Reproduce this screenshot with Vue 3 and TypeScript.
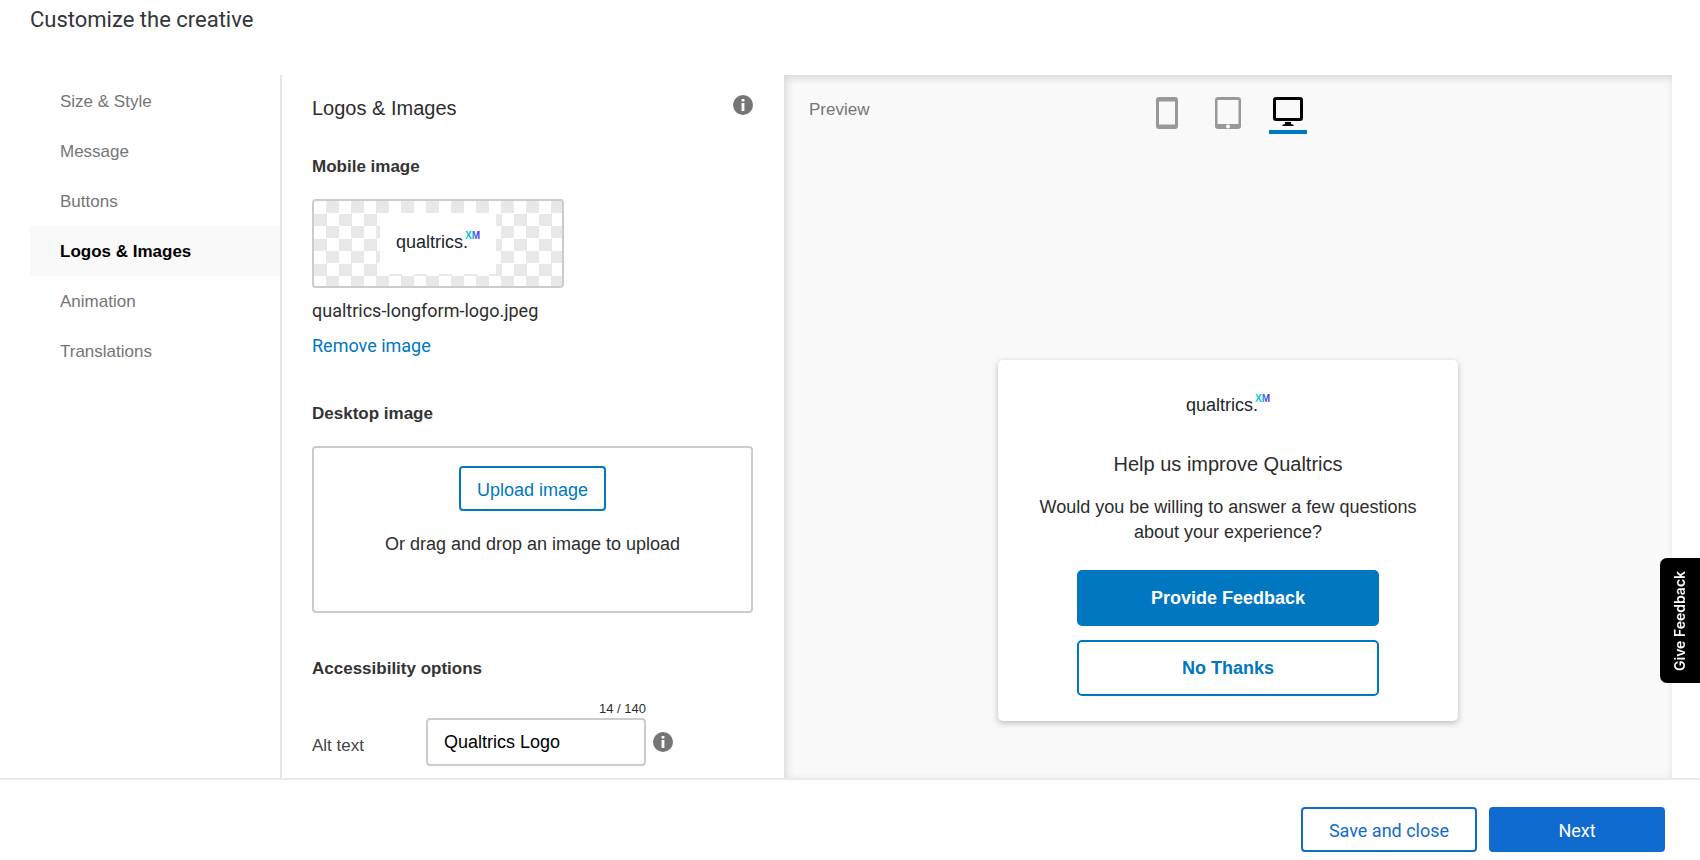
<script setup lang="ts">
import { ref } from 'vue'

type Device = 'phone' | 'tablet' | 'desktop'

const sections: string[] = ['Size & Style', 'Message', 'Buttons', 'Logos & Images', 'Animation', 'Translations']
const activeSection = ref('Logos & Images')

const devices: { id: Device; label: string }[] = [
  { id: 'phone', label: 'Phone preview' },
  { id: 'tablet', label: 'Tablet preview' },
  { id: 'desktop', label: 'Desktop preview' },
]
const device = ref<Device>('desktop')

const altText = ref('Qualtrics Logo')
const maxAlt = 140
</script>

<template>
  <div class="page">
    <svg class="defs" width="0" height="0" aria-hidden="true">
      <defs>
        <linearGradient id="xm" x1="0" y1="0" x2="1" y2="0">
          <stop offset="0" stop-color="#21dbaa" />
          <stop offset="0.4" stop-color="#00b4ef" />
          <stop offset="1" stop-color="#5f1ae5" />
        </linearGradient>
        <symbol id="logo" viewBox="0 0 116 61">
          <text class="word" x="16" y="35">qualtrics.</text>
          <text class="xm" x="85" y="26" fill="url(#xm)">XM</text>
        </symbol>
        <symbol id="info" viewBox="0 0 20 20">
          <circle cx="10" cy="10" r="10" fill="#757575" />
          <path d="M8.6 4h2.8v2.4H8.6zM8.6 8h2.8v8H8.6z" fill="#fff" />
        </symbol>
      </defs>
    </svg>

    <header class="top">
      <h1>Customize the creative</h1>
    </header>

    <main class="body">
      <nav class="nav" aria-label="Creative sections">
        <a
          v-for="s in sections"
          :key="s"
          href="#"
          :class="{ active: s === activeSection }"
          @click.prevent="activeSection = s"
        >{{ s }}</a>
      </nav>

      <section class="settings">
        <div class="title-row">
          <h2>Logos &amp; Images</h2>
          <button class="info" type="button" aria-label="About logos and images">
            <svg><use href="#info" /></svg>
          </button>
        </div>

        <h3>Mobile image</h3>
        <div class="thumb">
          <svg class="logo" role="img" aria-label="qualtrics XM"><use href="#logo" /></svg>
        </div>
        <p class="file">qualtrics-longform-logo.jpeg</p>
        <a class="remove" href="#" @click.prevent>Remove image</a>

        <h3 class="group-head">Desktop image</h3>
        <div class="drop">
          <button class="upload" type="button">Upload image</button>
          <p>Or drag and drop an image to upload</p>
        </div>

        <h3 class="group-head">Accessibility options</h3>
        <div class="alt">
          <label for="alt">Alt text</label>
          <span class="count">{{ altText.length }} / {{ maxAlt }}</span>
          <input id="alt" v-model="altText" type="text" :maxlength="maxAlt" />
          <button class="info" type="button" aria-label="About alt text">
            <svg><use href="#info" /></svg>
          </button>
        </div>
      </section>

      <section class="preview">
        <div class="preview-bar">
          <h2>Preview</h2>
          <div class="devices">
            <button
              v-for="d in devices"
              :key="d.id"
              type="button"
              :aria-label="d.label"
              :aria-pressed="device === d.id"
              :class="{ on: device === d.id }"
              @click="device = d.id"
            >
              <svg viewBox="0 0 30 32">
                <path
                  v-if="d.id === 'phone'"
                  fill-rule="evenodd"
                  d="M6 0h16a3 3 0 0 1 3 3v26a3 3 0 0 1-3 3H6a3 3 0 0 1-3-3V3a3 3 0 0 1 3-3zM6 4.5v23h16v-23z"
                />
                <template v-else-if="d.id === 'tablet'">
                  <path
                    fill-rule="evenodd"
                    d="M5 0h20a3 3 0 0 1 3 3v26a3 3 0 0 1-3 3H5a3 3 0 0 1-3-3V3a3 3 0 0 1 3-3zM4.500 3v24h21V3z"
                  />
                  <circle cx="15" cy="29.5" r="2" fill="#fff" />
                </template>
                <path
                  v-else
                  fill-rule="evenodd"
                  d="M3 0h24a3 3 0 0 1 3 3v18a3 3 0 0 1-3 3H3a3 3 0 0 1-3-3V3a3 3 0 0 1 3-3zM3 3v18h24V3zM12 25h6v2q2 0 3 2H9q1-2 3-2z"
                />
              </svg>
            </button>
          </div>
        </div>

        <article class="card">
          <svg class="logo" role="img" aria-label="qualtrics XM"><use href="#logo" /></svg>
          <h3>Help us improve Qualtrics</h3>
          <p>Would you be willing to answer a few questions about your experience?</p>
          <button class="primary" type="button">Provide Feedback</button>
          <button type="button">No Thanks</button>
        </article>
      </section>
    </main>

    <footer class="foot">
      <button type="button">Save and close</button>
      <button class="next" type="button">Next</button>
    </footer>

    <button class="feedback" type="button">Give Feedback</button>
  </div>
</template>

<style>
body {
  margin: 0;
  background: #fff;
}
</style>

<style scoped>
* {
  box-sizing: border-box;
}
.page {
  display: flex;
  flex-direction: column;
  height: 100vh;
  overflow: hidden;
  font-family: "Liberation Sans", Arial, sans-serif;
  font-size: 18px;
  line-height: 24px;
  color: #2d2d2d;
}
.defs {
  position: absolute;
}
h1, h2, h3, p {
  margin: 0;
  font-weight: 400;
}
a {
  text-decoration: none;
}
button {
  margin: 0;
  padding: 0;
  border: 0;
  background: none;
  font: inherit;
  cursor: pointer;
}
.word {
  font: 18px "Liberation Sans", sans-serif;
  fill: #20262b;
}
.xm {
  font: bold 10px "Liberation Sans", sans-serif;
}
.top {
  flex: none;
  height: 75px;
  padding: 6px 30px 0;
}
.top h1 {
  font-family: Roboto, sans-serif;
  font-size: 22px;
  line-height: 28px;
  color: #32363a;
}
.body {
  flex: 1;
  min-height: 0;
  display: grid;
  grid-template-columns: 252px 502px 1fr;
  padding: 0 28px 0 30px;
  overflow: hidden;
}
.nav {
  display: flex;
  flex-direction: column;
  padding-top: 1px;
  border-right: 2px solid #e6e6e6;
}
.nav a {
  padding: 14px 30px 12px;
  font-size: 17px;
  color: #757575;
}
.nav a.active {
  background: #f9f9f9;
  color: #000;
  font-weight: 700;
}
.settings {
  padding: 20px 31px 0 30px;
}
.title-row {
  display: flex;
  justify-content: space-between;
  align-items: flex-start;
}
.title-row h2 {
  font-size: 20px;
  line-height: 26px;
}
.info {
  width: 20px;
  height: 20px;
}
.info svg {
  display: block;
  width: 20px;
  height: 20px;
}
.settings h3 {
  margin-top: 34px;
  font-size: 17px;
  font-weight: 700;
  color: #333;
}
.thumb {
  display: flex;
  justify-content: center;
  width: 252px;
  height: 89px;
  margin-top: 20px;
  padding-top: 12px;
  border: 2px solid #ccc;
  border-radius: 4px;
  background: conic-gradient(#e8e8e8 25%, #fff 0 50%, #e8e8e8 0 75%, #fff 0) 0 0 / 25px 25px;
}
.logo {
  display: block;
  width: 116px;
  height: 61px;
  background: #fff;
}
.file {
  margin-top: 11px;
}
.file,
.remove {
  font-family: Roboto, sans-serif;
  font-size: 18px;
}
.remove {
  display: block;
  margin-top: 11px;
  color: #0077c0;
}
.settings .group-head {
  margin-top: 44px;
}
.drop {
  display: flex;
  flex-direction: column;
  align-items: center;
  height: 167px;
  margin-top: 20px;
  padding-top: 18px;
  border: 2px solid #ccc;
  border-radius: 4px;
}
.upload {
  height: 45px;
  padding: 2px 16px 0;
  border: 2px solid #0077c0;
  border-radius: 4px;
  color: #0077c0;
}
.drop p {
  margin-top: 21px;
}
.alt {
  display: grid;
  grid-template-columns: 114px 220px 20px;
  grid-template-rows: 16px 48px;
  column-gap: 0;
  row-gap: 1px;
  margin-top: 20px;
  align-items: center;
}
.alt label {
  grid-area: 2 / 1;
  padding-top: 8px;
  font-size: 17px;
  color: #444;
}
.count {
  grid-area: 1 / 2;
  text-align: right;
  font-size: 13px;
  line-height: 16px;
}
.alt input {
  grid-area: 2 / 2;
  width: 100%;
  height: 48px;
  padding: 0 16px;
  border: 2px solid #ccc;
  border-radius: 4px;
  font: inherit;
  color: #000;
  outline: none;
}
.alt .info {
  grid-area: 2 / 3;
  margin-left: 7px;
}
.preview {
  display: flex;
  flex-direction: column;
  align-items: center;
  justify-content: space-between;
  padding: 21px 25px 57px;
  background: #f9f9f9;
  box-shadow: inset 2px 3px 8px rgba(0, 0, 0, 0.14);
}
.preview-bar {
  display: grid;
  grid-template-columns: 1fr auto 1fr;
  width: 100%;
}
.preview-bar h2 {
  font-size: 17px;
  line-height: 28px;
  color: #757575;
}
.devices {
  display: flex;
  gap: 22px;
}
.devices button {
  height: 38px;
  padding: 0 4px;
  border-bottom: 4px solid transparent;
  fill: #999;
}
.devices button.on {
  border-color: #0077c0;
  fill: #000;
}
.devices svg {
  display: block;
  width: 30px;
  height: 32px;
}
.card {
  display: flex;
  flex-direction: column;
  align-items: center;
  width: 460px;
  padding: 16px 30px 25px;
  border-radius: 5px;
  background: #fff;
  box-shadow: 0 2px 6px rgba(0, 0, 0, 0.25);
  text-align: center;
}
.card h3 {
  margin-top: 14px;
  font-size: 20px;
  line-height: 26px;
}
.card p {
  margin-top: 18px;
  line-height: 25px;
}
.card button {
  width: 302px;
  height: 56px;
  margin-top: 14px;
  border: 2px solid #0077c0;
  border-radius: 5px;
  font-weight: 700;
  color: #0077c0;
}
.card .primary {
  margin-top: 25px;
  background: #0077c0;
  color: #fff;
}
.foot {
  flex: none;
  display: flex;
  justify-content: flex-end;
  gap: 12px;
  height: 82px;
  padding: 27px 35px 0;
  border-top: 2px solid #ebebeb;
}
.foot button {
  width: 176px;
  height: 45px;
  padding-top: 2px;
  border: 2px solid #0f6bd0;
  border-radius: 4px;
  font-family: Roboto, sans-serif;
  color: #0f6bd0;
}
.foot .next {
  background: #0f6bd0;
  color: #fff;
}
.feedback {
  position: fixed;
  right: 0;
  top: 558px;
  width: 40px;
  height: 125px;
  border-radius: 0 7px 7px 0;
  background: #000;
  color: #fff;
  font-family: Inter, sans-serif;
  font-size: 14px;
  font-weight: 600;
  writing-mode: vertical-rl;
  transform: rotate(180deg);
}
</style>
